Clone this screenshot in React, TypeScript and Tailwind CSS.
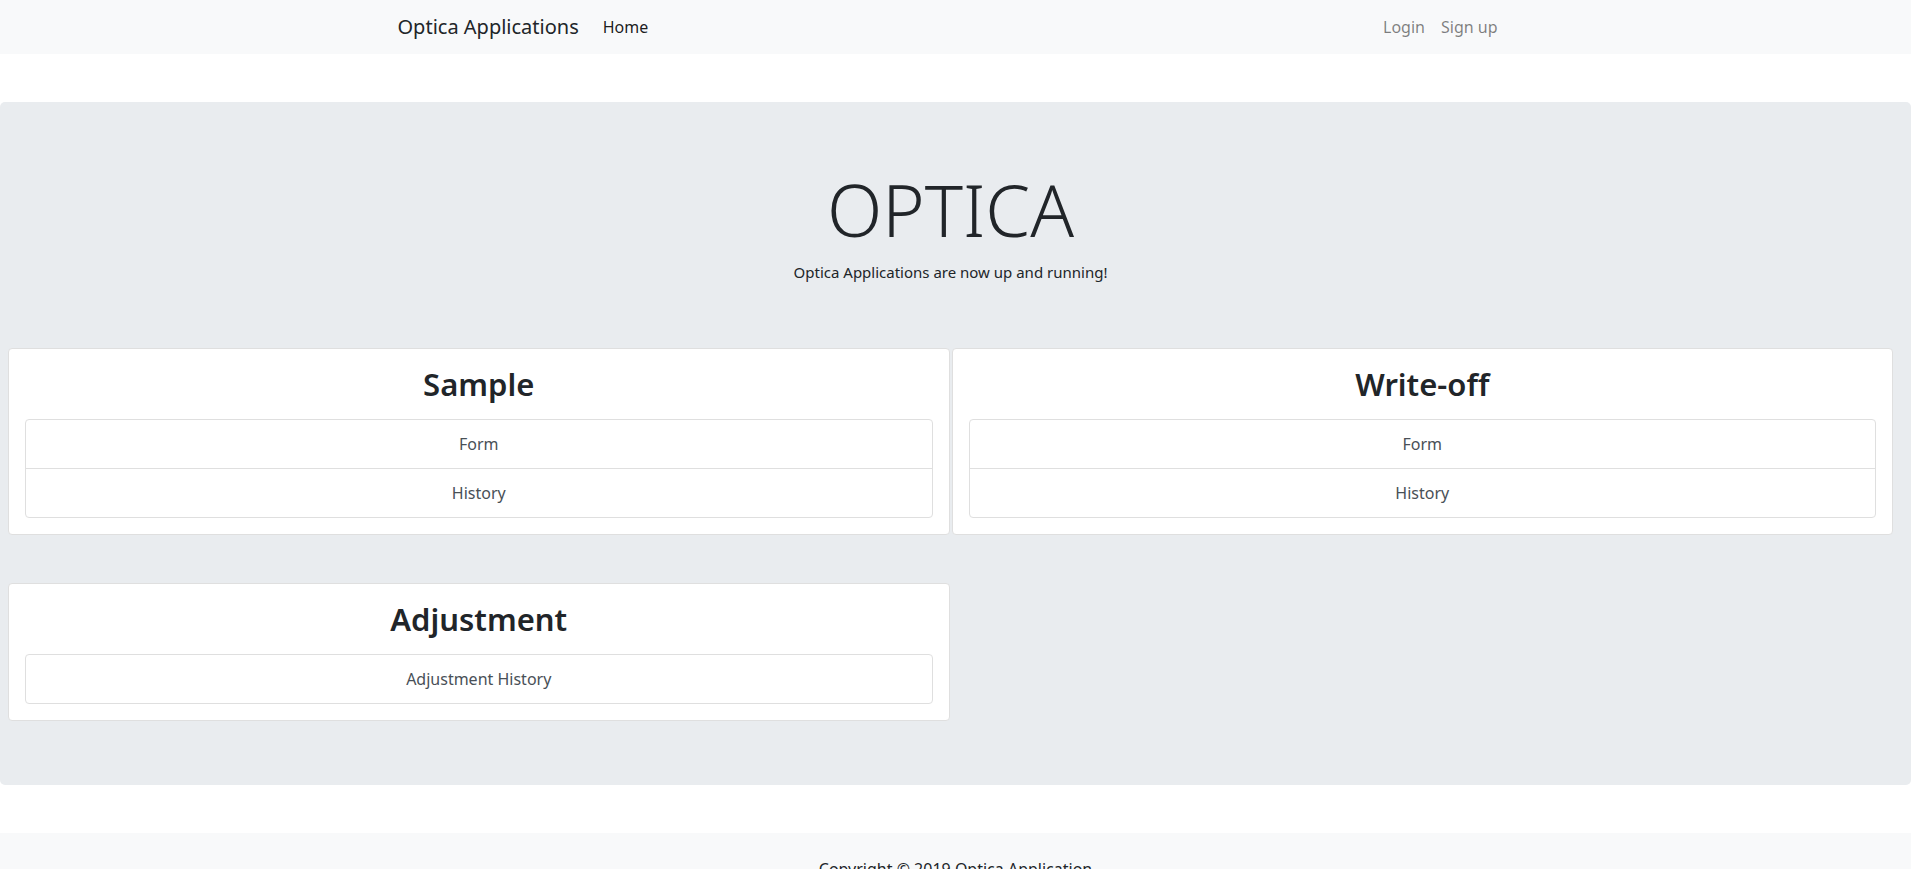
import React from 'react';

const font = { fontFamily: '"Noto Sans", "Open Sans", sans-serif' };

type CardProps = { title: string; links: string[] };

const AppCard = ({ title, links }: CardProps) => (
	<div className="bg-white border border-[#dfdfdf] rounded-[4px] p-4">
		<h2 className="text-[31px] leading-[38px] font-semibold text-center text-[#212529] mb-4">{title}</h2>
		<div className="border border-[#dfdfdf] rounded-[4px]">
			{links.map((link, i) => (
				<a
					key={link}
					href="#"
					className={`block text-center text-[16px] leading-6 py-3 px-5 text-[#495057] hover:bg-[#f8f9fa] ${i > 0 ? 'border-t border-[#dfdfdf]' : ''}`}
				>
					{link}
				</a>
			))}
		</div>
	</div>
);

export default function App() {
	return (
		<div className="min-h-screen bg-white text-[#212529]" style={font}>
			{/* Navbar */}
			<nav className="bg-[#f8f9fa] h-[54px]">
				<div className="max-w-[1140px] mx-auto px-[12px] h-full flex items-center">
					<a href="#" className="text-[20px] text-[#212529] mr-4">Optica Applications</a>
					<a href="#" className="text-[16px] px-2 text-[rgba(0,0,0,0.9)]">Home</a>
					<div className="ml-auto flex pr-2">
						<a href="#" className="text-[16px] px-2 text-[rgba(0,0,0,0.5)]">Login</a>
						<a href="#" className="text-[16px] px-2 text-[rgba(0,0,0,0.5)]">Sign up</a>
					</div>
				</div>
			</nav>

			{/* Jumbotron */}
			<div className="mt-12 bg-[#e9ecef] rounded-[5px] pt-16 pb-16 pl-2 pr-[18px]">
				<h1 className="text-[72px] leading-[86px] font-light text-center mb-2">OPTICA</h1>
				<p className="text-[15px] leading-6 text-center">Optica Applications are now up and running!</p>

				<div className="mt-16 grid grid-cols-2 gap-x-[2px] gap-y-[48px]">
					<AppCard title="Sample" links={['Form', 'History']} />
					<AppCard title="Write-off" links={['Form', 'History']} />
					<AppCard title="Adjustment" links={['Adjustment History']} />
				</div>
			</div>

			{/* Footer */}
			<footer className="mt-12 bg-[#f8f9fa] py-6">
				<p className="text-center text-[16px] leading-6">Copyright © 2019 Optica Application</p>
			</footer>
		</div>
	);
}
